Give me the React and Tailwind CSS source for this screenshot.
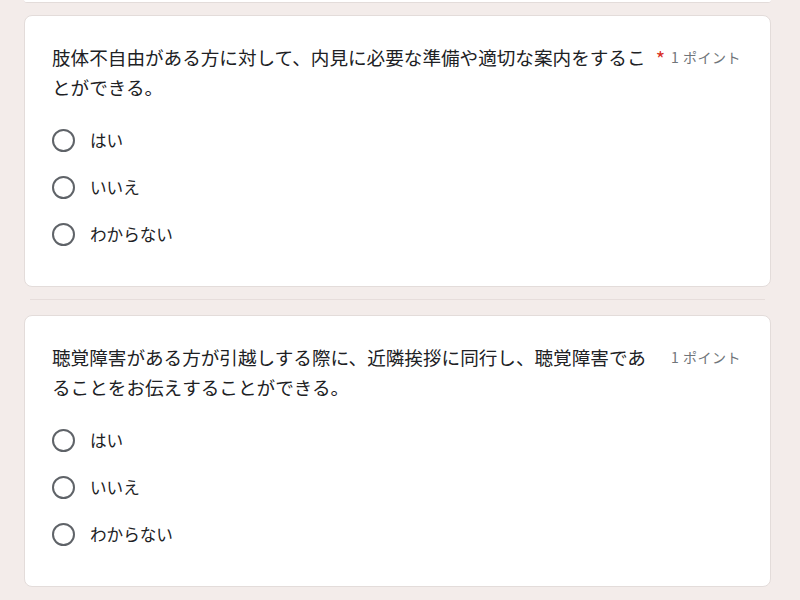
import React from 'react';

const questions = [
  {
    title: '肢体不自由がある方に対して、内見に必要な準備や適切な案内をすることができる。',
    required: true,
  },
  {
    title: '聴覚障害がある方が引越しする際に、近隣挨拶に同行し、聴覚障害であることをお伝えすることができる。',
    required: false,
  },
];

const options = ['はい', 'いいえ', 'わからない'];

const Radio = ({ label }) => (
  <label className="flex items-center h-[47px] cursor-pointer">
    <span className="w-[40px] flex justify-center">
      <span className="block w-[23px] h-[23px] rounded-full border-[2.5px] border-[#5f6368]" />
    </span>
    <span className="ml-[7px] text-[16.6px] text-[#202124]">{label}</span>
  </label>
);

const QuestionCard = ({ q }) => (
  <div className="bg-white rounded-[8px] border border-[#e3dcda] pl-[27px] pr-[29px] pt-[26px] pb-[28px]">
    <div className="flex items-start">
      <div className="w-[600px] text-[18.6px] leading-[30px] text-[#202124]">{q.title}</div>
      <div className="flex-1 flex items-center justify-end h-[30px]">
        {q.required && <span className="text-[#d93025] text-[20px] mr-[6px] leading-none mt-[4px]">*</span>}
        <span className="text-[14px] tracking-[0.5px] text-[#70757a]">1 ポイント</span>
      </div>
    </div>
    <div className="mt-[15px] -ml-[9px]">
      {options.map((o) => (
        <Radio key={o} label={o} />
      ))}
    </div>
  </div>
);

export default function App() {
  return (
    <div
      className="w-[800px] h-[600px] overflow-hidden bg-[#f3ecea]"
      style={{ fontFamily: '"Noto Sans CJK JP", "Noto Sans", sans-serif' }}
    >
      <div className="w-[747px] ml-[24px]">
        <div className="h-[3px] bg-white border-b border-[#e3dcda] rounded-b-[8px]" />
        <div className="mt-[12px]">
          <QuestionCard q={questions[0]} />
        </div>
        <div className="mt-[12px] mx-[6px] h-px bg-[#e6dddb]" />
        <div className="mt-[15px]">
          <QuestionCard q={questions[1]} />
        </div>
      </div>
    </div>
  );
}
